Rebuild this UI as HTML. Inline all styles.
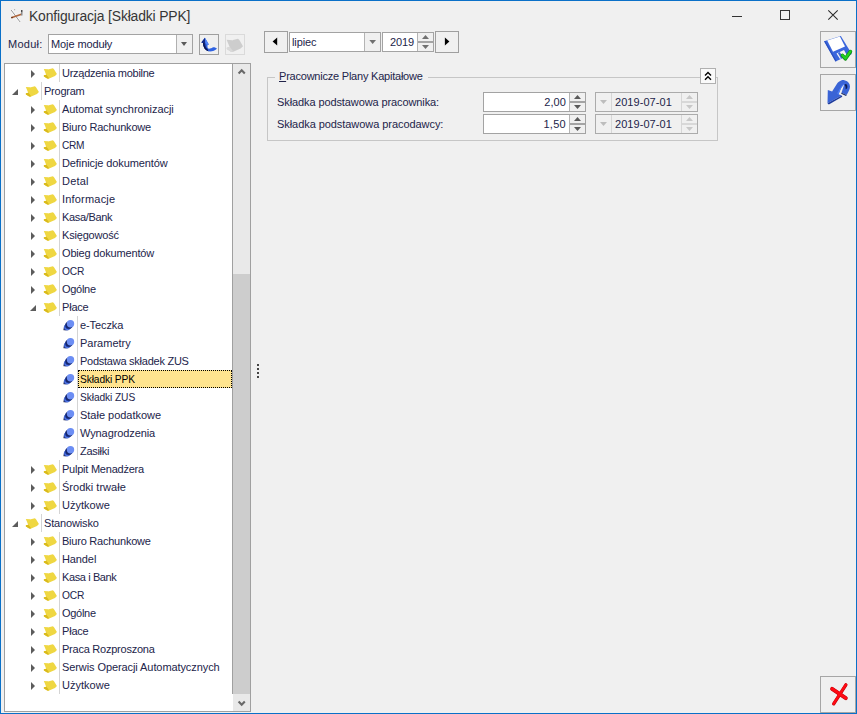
<!DOCTYPE html>
<html lang="pl"><head><meta charset="utf-8"><title>Konfiguracja [Składki PPK]</title>
<style>
*{box-sizing:border-box;margin:0;padding:0}
html,body{width:857px;height:714px;overflow:hidden;background:#f0f0f0}
body{position:relative;font-family:"Liberation Sans",sans-serif;font-size:11px;color:#22244a}
#win{position:absolute;left:0;top:0;width:857px;height:714px;background:#f0f0f0}
#frame{position:absolute;left:0;top:0;width:857px;height:714px;border:1px solid #0a70c8;z-index:10}
.abs{position:absolute}
b{font-weight:normal;white-space:nowrap}
.t{position:absolute;white-space:nowrap;line-height:14px;height:14px}
#title{left:28.5px;top:7px;font-size:14.67px;line-height:18px;height:18px;color:#363636}
.box{position:absolute;border:1px solid #a3a3a3;background:#fff}
.btn{position:absolute;border:1px solid #9f9f9f;background:#f0f0f0}
.rb{border-color:#a6a6a6}
#tree{position:absolute;left:4px;top:63px;width:247px;height:649px;border:1px solid #a0a0a0;background:#fff;overflow:hidden}
.row{position:absolute;left:0;width:228px;height:18px}
.row .lbl{position:absolute;top:2px;line-height:14px;height:14px;white-space:nowrap}
.row .sel{position:absolute;top:0;height:18px;width:154px;background:#ffe48f;border:1px dotted #000;color:#000;line-height:14px;padding:1px 0 0 1px;white-space:nowrap}
.ico{position:absolute;top:1px}
.sep{position:absolute;top:0;width:1px;height:18px;background:#d4d4d4}
.arr-c{position:absolute;top:6px;width:0;height:0;border-left:4px solid #5c5c5c;border-top:4px solid transparent;border-bottom:4px solid transparent}
.arr-e{position:absolute;top:7px;width:0;height:0;border-bottom:6px solid #5c5c5c;border-left:6px solid transparent}
#sb{position:absolute;left:227px;top:0;width:18px;height:647px;background:linear-gradient(to right,#fff 1px,#e9e9e9 1px)}
#sbl{position:absolute;left:0;top:0;width:1px;height:630px;background:#a0a0a0}
#thumb{position:absolute;left:1px;top:210px;width:17px;height:420px;background:#cdcdcd}
</style></head><body>
<div id="win">
<!-- title bar -->
<svg class="abs" style="left:9px;top:8px" width="18" height="18" viewBox="0 0 18 18">
<path d="M2.4 2.4 L10.8 13.6" stroke="#fff" stroke-width="2.2" opacity="0.7"/>
<path d="M2.4 2.4 L10.8 13.6" stroke="#5a5a5a" stroke-width="1" stroke-dasharray="1.6 0.9"/>
<circle cx="5.6" cy="1.7" r="0.6" fill="#aaa"/>
<path d="M3 9.5 L11.8 6.5" stroke="#b0663c" stroke-width="1.8" stroke-linecap="round"/>
<circle cx="3" cy="9.5" r="0.8" fill="#5a2c14"/>
<path d="M12.75 2 L12.75 4.6" stroke="#4a4a4a" stroke-width="1.5"/>
<path d="M12.75 4.6 L12.75 7.6" stroke="#8a8a8a" stroke-width="1.5"/>
</svg>
<div class="t" id="title"><b id="ttl" style="letter-spacing:-0.178px;display:inline-block;transform:scaleX(0.95);transform-origin:0 0;">Konfiguracja [Składki PPK]</b></div>
<svg class="abs" style="left:731px;top:9px" width="112" height="14" viewBox="0 0 112 14" shape-rendering="crispEdges">
<path d="M1 7.5 H11" stroke="#333" stroke-width="1"/>
<rect x="49.5" y="1.5" width="9" height="9" fill="none" stroke="#333" stroke-width="1"/>
</svg>
<svg class="abs" style="left:827px;top:9px" width="14" height="14" viewBox="0 0 14 14">
<path d="M1.3 1.3 L10.7 10.7 M10.7 1.3 L1.3 10.7" stroke="#2a2a2a" stroke-width="1.05"/>
</svg>

<!-- left toolbar -->
<div class="t" style="left:8px;top:37px"><b id="mod" style="letter-spacing:0.274px;">Moduł:</b></div>
<div class="box" style="left:48px;top:34px;width:145px;height:20px"></div>
<div class="abs" style="left:176px;top:35px;width:1px;height:18px;background:#b0b0b0"></div>
<div class="abs" style="left:177px;top:35px;width:15px;height:18px;background:#f0f0f0"></div>
<div class="abs" style="left:181px;top:42px;width:0;height:0;border-top:4px solid #5a5a5a;border-left:3.5px solid transparent;border-right:3.5px solid transparent"></div>
<div class="t" style="left:51px;top:37px"><b id="mm" style="letter-spacing:-0.1px;">Moje moduły</b></div>
<div class="btn" style="left:199px;top:34px;width:20px;height:21px"></div>
<svg class="abs" style="left:199px;top:34px" width="21" height="22" viewBox="0 0 21 22">
<path d="M5.9 3.8 L2.3 8.6 L4 8.9 C4.2 13 5.8 16 9.3 17.3 C12.5 17.8 16.3 16.6 17.9 14.7 C17 13.5 15.3 13 13.9 13.2 C12.3 14.5 10.3 14.9 9 14.5 C8.3 13.3 8.4 12 8.7 10.6 L10 10.8 Z" fill="#2f63e2"/>
<path d="M5.9 3.8 L2.3 8.6 L4 8.9 C4.2 13 5.8 16 9.3 17.3 L8.4 14.6 C6.6 13 6.2 11 6.3 8.4 Z" fill="#132a86"/>
<path d="M4 8.9 C4.2 13 5.8 16 9.3 17.3 L8.8 15.8 C6.6 14.6 5.4 12 5.2 9 Z" fill="#0c1650"/>
<path d="M5.9 3.8 L6.3 8.4 L7 10.2 L8.7 10.6 L10 10.8 Z" fill="#4f82f6"/>
</svg>
<div class="btn" style="left:225px;top:34px;width:20px;height:21px;border-color:#dadada"></div>
<svg class="abs" style="left:225px;top:37px" width="20" height="18" viewBox="1.5 2 16 14"><g opacity="1">
<path d="M2.8 4 L7.2 4.3 L7.5 4.6 L7.9 4.2 L11.9 3.2 L13 4.2 L15.9 9.1 L14 11 L7.6 13.8 L6.2 13.6 L2.9 11.4 L2.9 10.3 L5.2 9.8 Z" fill="#cdcdcd"/><path d="M2.9 10.3 L5.4 9.8 L7.6 12.6 L7.6 13.8 L6.2 13.6 L2.9 11.4 Z" fill="#d9d9d9"/></g>
</svg>

<!-- tree -->
<div id="tree">
<div class="row" style="top:0px"><i class="arr-c" style="left:26px"></i><svg class="ico" style="left:36px" width="16" height="16" viewBox="0 0 16 16"><path d="M2.8 4 L7.2 4.3 L7.5 4.6 L7.9 4.2 L11.9 3.2 L13 4.2 L15.9 9.1 L14 11 L7.6 13.8 L6.2 13.6 L2.9 11.4 L2.9 10.3 L5.2 9.8 Z" fill="#efd742"/><path d="M2.9 10.3 L5.4 9.8 L7.6 12.6 L7.6 13.8 L6.2 13.6 L2.9 11.4 Z" fill="#d9ba1c"/></svg><i class="sep" style="left:54px"></i><span class="lbl" style="left:57px" ><b id="r0" style="letter-spacing:-0.264px;">Urządzenia mobilne</b></span></div>
<div class="row" style="top:18px"><i class="arr-e" style="left:7px"></i><svg class="ico" style="left:18px" width="16" height="16" viewBox="0 0 16 16"><path d="M2.8 4 L7.2 4.3 L7.5 4.6 L7.9 4.2 L11.9 3.2 L13 4.2 L15.9 9.1 L14 11 L7.6 13.8 L6.2 13.6 L2.9 11.4 L2.9 10.3 L5.2 9.8 Z" fill="#efd742"/><path d="M2.9 10.3 L5.4 9.8 L7.6 12.6 L7.6 13.8 L6.2 13.6 L2.9 11.4 Z" fill="#d9ba1c"/></svg><i class="sep" style="left:36px"></i><span class="lbl" style="left:39px" ><b id="r1" style="letter-spacing:-0.24px;">Program</b></span></div>
<div class="row" style="top:36px"><i class="arr-c" style="left:26px"></i><svg class="ico" style="left:36px" width="16" height="16" viewBox="0 0 16 16"><path d="M2.8 4 L7.2 4.3 L7.5 4.6 L7.9 4.2 L11.9 3.2 L13 4.2 L15.9 9.1 L14 11 L7.6 13.8 L6.2 13.6 L2.9 11.4 L2.9 10.3 L5.2 9.8 Z" fill="#efd742"/><path d="M2.9 10.3 L5.4 9.8 L7.6 12.6 L7.6 13.8 L6.2 13.6 L2.9 11.4 Z" fill="#d9ba1c"/></svg><i class="sep" style="left:54px"></i><span class="lbl" style="left:57px" ><b id="r2" style="letter-spacing:-0.065px;">Automat synchronizacji</b></span></div>
<div class="row" style="top:54px"><i class="arr-c" style="left:26px"></i><svg class="ico" style="left:36px" width="16" height="16" viewBox="0 0 16 16"><path d="M2.8 4 L7.2 4.3 L7.5 4.6 L7.9 4.2 L11.9 3.2 L13 4.2 L15.9 9.1 L14 11 L7.6 13.8 L6.2 13.6 L2.9 11.4 L2.9 10.3 L5.2 9.8 Z" fill="#efd742"/><path d="M2.9 10.3 L5.4 9.8 L7.6 12.6 L7.6 13.8 L6.2 13.6 L2.9 11.4 Z" fill="#d9ba1c"/></svg><i class="sep" style="left:54px"></i><span class="lbl" style="left:57px" ><b id="r3" style="letter-spacing:-0.212px;">Biuro Rachunkowe</b></span></div>
<div class="row" style="top:72px"><i class="arr-c" style="left:26px"></i><svg class="ico" style="left:36px" width="16" height="16" viewBox="0 0 16 16"><path d="M2.8 4 L7.2 4.3 L7.5 4.6 L7.9 4.2 L11.9 3.2 L13 4.2 L15.9 9.1 L14 11 L7.6 13.8 L6.2 13.6 L2.9 11.4 L2.9 10.3 L5.2 9.8 Z" fill="#efd742"/><path d="M2.9 10.3 L5.4 9.8 L7.6 12.6 L7.6 13.8 L6.2 13.6 L2.9 11.4 Z" fill="#d9ba1c"/></svg><i class="sep" style="left:54px"></i><span class="lbl" style="left:57px" ><b id="r4" style="letter-spacing:-0.286px;display:inline-block;transform:scaleX(0.92);transform-origin:0 0;">CRM</b></span></div>
<div class="row" style="top:90px"><i class="arr-c" style="left:26px"></i><svg class="ico" style="left:36px" width="16" height="16" viewBox="0 0 16 16"><path d="M2.8 4 L7.2 4.3 L7.5 4.6 L7.9 4.2 L11.9 3.2 L13 4.2 L15.9 9.1 L14 11 L7.6 13.8 L6.2 13.6 L2.9 11.4 L2.9 10.3 L5.2 9.8 Z" fill="#efd742"/><path d="M2.9 10.3 L5.4 9.8 L7.6 12.6 L7.6 13.8 L6.2 13.6 L2.9 11.4 Z" fill="#d9ba1c"/></svg><i class="sep" style="left:54px"></i><span class="lbl" style="left:57px" ><b id="r5" style="letter-spacing:-0.1px;">Definicje dokumentów</b></span></div>
<div class="row" style="top:108px"><i class="arr-c" style="left:26px"></i><svg class="ico" style="left:36px" width="16" height="16" viewBox="0 0 16 16"><path d="M2.8 4 L7.2 4.3 L7.5 4.6 L7.9 4.2 L11.9 3.2 L13 4.2 L15.9 9.1 L14 11 L7.6 13.8 L6.2 13.6 L2.9 11.4 L2.9 10.3 L5.2 9.8 Z" fill="#efd742"/><path d="M2.9 10.3 L5.4 9.8 L7.6 12.6 L7.6 13.8 L6.2 13.6 L2.9 11.4 Z" fill="#d9ba1c"/></svg><i class="sep" style="left:54px"></i><span class="lbl" style="left:57px" ><b id="r6" style="letter-spacing:0.211px;">Detal</b></span></div>
<div class="row" style="top:126px"><i class="arr-c" style="left:26px"></i><svg class="ico" style="left:36px" width="16" height="16" viewBox="0 0 16 16"><path d="M2.8 4 L7.2 4.3 L7.5 4.6 L7.9 4.2 L11.9 3.2 L13 4.2 L15.9 9.1 L14 11 L7.6 13.8 L6.2 13.6 L2.9 11.4 L2.9 10.3 L5.2 9.8 Z" fill="#efd742"/><path d="M2.9 10.3 L5.4 9.8 L7.6 12.6 L7.6 13.8 L6.2 13.6 L2.9 11.4 Z" fill="#d9ba1c"/></svg><i class="sep" style="left:54px"></i><span class="lbl" style="left:57px" ><b id="r7" style="letter-spacing:0.191px;">Informacje</b></span></div>
<div class="row" style="top:144px"><i class="arr-c" style="left:26px"></i><svg class="ico" style="left:36px" width="16" height="16" viewBox="0 0 16 16"><path d="M2.8 4 L7.2 4.3 L7.5 4.6 L7.9 4.2 L11.9 3.2 L13 4.2 L15.9 9.1 L14 11 L7.6 13.8 L6.2 13.6 L2.9 11.4 L2.9 10.3 L5.2 9.8 Z" fill="#efd742"/><path d="M2.9 10.3 L5.4 9.8 L7.6 12.6 L7.6 13.8 L6.2 13.6 L2.9 11.4 Z" fill="#d9ba1c"/></svg><i class="sep" style="left:54px"></i><span class="lbl" style="left:57px" ><b id="r8" style="letter-spacing:-0.325px;">Kasa/Bank</b></span></div>
<div class="row" style="top:162px"><i class="arr-c" style="left:26px"></i><svg class="ico" style="left:36px" width="16" height="16" viewBox="0 0 16 16"><path d="M2.8 4 L7.2 4.3 L7.5 4.6 L7.9 4.2 L11.9 3.2 L13 4.2 L15.9 9.1 L14 11 L7.6 13.8 L6.2 13.6 L2.9 11.4 L2.9 10.3 L5.2 9.8 Z" fill="#efd742"/><path d="M2.9 10.3 L5.4 9.8 L7.6 12.6 L7.6 13.8 L6.2 13.6 L2.9 11.4 Z" fill="#d9ba1c"/></svg><i class="sep" style="left:54px"></i><span class="lbl" style="left:57px" ><b id="r9" style="letter-spacing:-0.192px;">Księgowość</b></span></div>
<div class="row" style="top:180px"><i class="arr-c" style="left:26px"></i><svg class="ico" style="left:36px" width="16" height="16" viewBox="0 0 16 16"><path d="M2.8 4 L7.2 4.3 L7.5 4.6 L7.9 4.2 L11.9 3.2 L13 4.2 L15.9 9.1 L14 11 L7.6 13.8 L6.2 13.6 L2.9 11.4 L2.9 10.3 L5.2 9.8 Z" fill="#efd742"/><path d="M2.9 10.3 L5.4 9.8 L7.6 12.6 L7.6 13.8 L6.2 13.6 L2.9 11.4 Z" fill="#d9ba1c"/></svg><i class="sep" style="left:54px"></i><span class="lbl" style="left:57px" ><b id="r10" style="letter-spacing:-0.173px;">Obieg dokumentów</b></span></div>
<div class="row" style="top:198px"><i class="arr-c" style="left:26px"></i><svg class="ico" style="left:36px" width="16" height="16" viewBox="0 0 16 16"><path d="M2.8 4 L7.2 4.3 L7.5 4.6 L7.9 4.2 L11.9 3.2 L13 4.2 L15.9 9.1 L14 11 L7.6 13.8 L6.2 13.6 L2.9 11.4 L2.9 10.3 L5.2 9.8 Z" fill="#efd742"/><path d="M2.9 10.3 L5.4 9.8 L7.6 12.6 L7.6 13.8 L6.2 13.6 L2.9 11.4 Z" fill="#d9ba1c"/></svg><i class="sep" style="left:54px"></i><span class="lbl" style="left:57px" ><b id="r11" style="letter-spacing:-0.212px;display:inline-block;transform:scaleX(0.93);transform-origin:0 0;">OCR</b></span></div>
<div class="row" style="top:216px"><i class="arr-c" style="left:26px"></i><svg class="ico" style="left:36px" width="16" height="16" viewBox="0 0 16 16"><path d="M2.8 4 L7.2 4.3 L7.5 4.6 L7.9 4.2 L11.9 3.2 L13 4.2 L15.9 9.1 L14 11 L7.6 13.8 L6.2 13.6 L2.9 11.4 L2.9 10.3 L5.2 9.8 Z" fill="#efd742"/><path d="M2.9 10.3 L5.4 9.8 L7.6 12.6 L7.6 13.8 L6.2 13.6 L2.9 11.4 Z" fill="#d9ba1c"/></svg><i class="sep" style="left:54px"></i><span class="lbl" style="left:57px" ><b id="r12" style="letter-spacing:-0.293px;">Ogólne</b></span></div>
<div class="row" style="top:234px"><i class="arr-e" style="left:25px"></i><svg class="ico" style="left:36px" width="16" height="16" viewBox="0 0 16 16"><path d="M2.8 4 L7.2 4.3 L7.5 4.6 L7.9 4.2 L11.9 3.2 L13 4.2 L15.9 9.1 L14 11 L7.6 13.8 L6.2 13.6 L2.9 11.4 L2.9 10.3 L5.2 9.8 Z" fill="#efd742"/><path d="M2.9 10.3 L5.4 9.8 L7.6 12.6 L7.6 13.8 L6.2 13.6 L2.9 11.4 Z" fill="#d9ba1c"/></svg><i class="sep" style="left:54px"></i><span class="lbl" style="left:57px" ><b id="r13" style="letter-spacing:-0.202px;">Płace</b></span></div>
<div class="row" style="top:252px"><svg class="ico" style="left:54px" width="16" height="16" viewBox="0 0 16 16"><path d="M4.4 11.2 L7.2 13.2 L4.6 13.3 Z" fill="#10163c"/><ellipse cx="7.9" cy="10.6" rx="3.1" ry="3" fill="#2340a6"/><ellipse cx="8.5" cy="9.9" rx="3.1" ry="3" fill="#5d83ee"/><ellipse cx="9.3" cy="9" rx="3.3" ry="3.2" fill="#2a49b4"/><ellipse cx="10.1" cy="8.1" rx="3.7" ry="3.6" fill="#15266a"/><ellipse cx="11.5" cy="6.7" rx="3.7" ry="3.7" fill="#6c8ef4"/>
</svg><i class="sep" style="left:72px"></i><span class="lbl" style="left:75px" ><b id="r14" style="letter-spacing:-0.096px;">e-Teczka</b></span></div>
<div class="row" style="top:270px"><svg class="ico" style="left:54px" width="16" height="16" viewBox="0 0 16 16"><path d="M4.4 11.2 L7.2 13.2 L4.6 13.3 Z" fill="#10163c"/><ellipse cx="7.9" cy="10.6" rx="3.1" ry="3" fill="#2340a6"/><ellipse cx="8.5" cy="9.9" rx="3.1" ry="3" fill="#5d83ee"/><ellipse cx="9.3" cy="9" rx="3.3" ry="3.2" fill="#2a49b4"/><ellipse cx="10.1" cy="8.1" rx="3.7" ry="3.6" fill="#15266a"/><ellipse cx="11.5" cy="6.7" rx="3.7" ry="3.7" fill="#6c8ef4"/>
</svg><i class="sep" style="left:72px"></i><span class="lbl" style="left:75px" ><b id="r15" style="letter-spacing:0.0px;">Parametry</b></span></div>
<div class="row" style="top:288px"><svg class="ico" style="left:54px" width="16" height="16" viewBox="0 0 16 16"><path d="M4.4 11.2 L7.2 13.2 L4.6 13.3 Z" fill="#10163c"/><ellipse cx="7.9" cy="10.6" rx="3.1" ry="3" fill="#2340a6"/><ellipse cx="8.5" cy="9.9" rx="3.1" ry="3" fill="#5d83ee"/><ellipse cx="9.3" cy="9" rx="3.3" ry="3.2" fill="#2a49b4"/><ellipse cx="10.1" cy="8.1" rx="3.7" ry="3.6" fill="#15266a"/><ellipse cx="11.5" cy="6.7" rx="3.7" ry="3.7" fill="#6c8ef4"/>
</svg><i class="sep" style="left:72px"></i><span class="lbl" style="left:75px" ><b id="r16" style="letter-spacing:-0.252px;">Podstawa składek ZUS</b></span></div>
<div class="row" style="top:306px"><svg class="ico" style="left:54px" width="16" height="16" viewBox="0 0 16 16"><path d="M4.4 11.2 L7.2 13.2 L4.6 13.3 Z" fill="#10163c"/><ellipse cx="7.9" cy="10.6" rx="3.1" ry="3" fill="#2340a6"/><ellipse cx="8.5" cy="9.9" rx="3.1" ry="3" fill="#5d83ee"/><ellipse cx="9.3" cy="9" rx="3.3" ry="3.2" fill="#2a49b4"/><ellipse cx="10.1" cy="8.1" rx="3.7" ry="3.6" fill="#15266a"/><ellipse cx="11.5" cy="6.7" rx="3.7" ry="3.7" fill="#6c8ef4"/>
</svg><i class="sep" style="left:72px"></i><span class="sel" style="left:73px"><b id="r17" style="letter-spacing:-0.13px;display:inline-block;transform:scaleX(0.93);transform-origin:0 0;">Składki PPK</b></span></div>
<div class="row" style="top:324px"><svg class="ico" style="left:54px" width="16" height="16" viewBox="0 0 16 16"><path d="M4.4 11.2 L7.2 13.2 L4.6 13.3 Z" fill="#10163c"/><ellipse cx="7.9" cy="10.6" rx="3.1" ry="3" fill="#2340a6"/><ellipse cx="8.5" cy="9.9" rx="3.1" ry="3" fill="#5d83ee"/><ellipse cx="9.3" cy="9" rx="3.3" ry="3.2" fill="#2a49b4"/><ellipse cx="10.1" cy="8.1" rx="3.7" ry="3.6" fill="#15266a"/><ellipse cx="11.5" cy="6.7" rx="3.7" ry="3.7" fill="#6c8ef4"/>
</svg><i class="sep" style="left:72px"></i><span class="lbl" style="left:75px" ><b id="r18" style="letter-spacing:-0.114px;display:inline-block;transform:scaleX(0.93);transform-origin:0 0;">Składki ZUS</b></span></div>
<div class="row" style="top:342px"><svg class="ico" style="left:54px" width="16" height="16" viewBox="0 0 16 16"><path d="M4.4 11.2 L7.2 13.2 L4.6 13.3 Z" fill="#10163c"/><ellipse cx="7.9" cy="10.6" rx="3.1" ry="3" fill="#2340a6"/><ellipse cx="8.5" cy="9.9" rx="3.1" ry="3" fill="#5d83ee"/><ellipse cx="9.3" cy="9" rx="3.3" ry="3.2" fill="#2a49b4"/><ellipse cx="10.1" cy="8.1" rx="3.7" ry="3.6" fill="#15266a"/><ellipse cx="11.5" cy="6.7" rx="3.7" ry="3.7" fill="#6c8ef4"/>
</svg><i class="sep" style="left:72px"></i><span class="lbl" style="left:75px" ><b id="r19" style="letter-spacing:-0.012px;">Stałe podatkowe</b></span></div>
<div class="row" style="top:360px"><svg class="ico" style="left:54px" width="16" height="16" viewBox="0 0 16 16"><path d="M4.4 11.2 L7.2 13.2 L4.6 13.3 Z" fill="#10163c"/><ellipse cx="7.9" cy="10.6" rx="3.1" ry="3" fill="#2340a6"/><ellipse cx="8.5" cy="9.9" rx="3.1" ry="3" fill="#5d83ee"/><ellipse cx="9.3" cy="9" rx="3.3" ry="3.2" fill="#2a49b4"/><ellipse cx="10.1" cy="8.1" rx="3.7" ry="3.6" fill="#15266a"/><ellipse cx="11.5" cy="6.7" rx="3.7" ry="3.7" fill="#6c8ef4"/>
</svg><i class="sep" style="left:72px"></i><span class="lbl" style="left:75px" ><b id="r20" style="letter-spacing:-0.097px;">Wynagrodzenia</b></span></div>
<div class="row" style="top:378px"><svg class="ico" style="left:54px" width="16" height="16" viewBox="0 0 16 16"><path d="M4.4 11.2 L7.2 13.2 L4.6 13.3 Z" fill="#10163c"/><ellipse cx="7.9" cy="10.6" rx="3.1" ry="3" fill="#2340a6"/><ellipse cx="8.5" cy="9.9" rx="3.1" ry="3" fill="#5d83ee"/><ellipse cx="9.3" cy="9" rx="3.3" ry="3.2" fill="#2a49b4"/><ellipse cx="10.1" cy="8.1" rx="3.7" ry="3.6" fill="#15266a"/><ellipse cx="11.5" cy="6.7" rx="3.7" ry="3.7" fill="#6c8ef4"/>
</svg><i class="sep" style="left:72px"></i><span class="lbl" style="left:75px" ><b id="r21" style="letter-spacing:-0.306px;">Zasiłki</b></span></div>
<div class="row" style="top:396px"><i class="arr-c" style="left:26px"></i><svg class="ico" style="left:36px" width="16" height="16" viewBox="0 0 16 16"><path d="M2.8 4 L7.2 4.3 L7.5 4.6 L7.9 4.2 L11.9 3.2 L13 4.2 L15.9 9.1 L14 11 L7.6 13.8 L6.2 13.6 L2.9 11.4 L2.9 10.3 L5.2 9.8 Z" fill="#efd742"/><path d="M2.9 10.3 L5.4 9.8 L7.6 12.6 L7.6 13.8 L6.2 13.6 L2.9 11.4 Z" fill="#d9ba1c"/></svg><i class="sep" style="left:54px"></i><span class="lbl" style="left:57px" ><b id="r22" style="letter-spacing:-0.234px;">Pulpit Menadżera</b></span></div>
<div class="row" style="top:414px"><i class="arr-c" style="left:26px"></i><svg class="ico" style="left:36px" width="16" height="16" viewBox="0 0 16 16"><path d="M2.8 4 L7.2 4.3 L7.5 4.6 L7.9 4.2 L11.9 3.2 L13 4.2 L15.9 9.1 L14 11 L7.6 13.8 L6.2 13.6 L2.9 11.4 L2.9 10.3 L5.2 9.8 Z" fill="#efd742"/><path d="M2.9 10.3 L5.4 9.8 L7.6 12.6 L7.6 13.8 L6.2 13.6 L2.9 11.4 Z" fill="#d9ba1c"/></svg><i class="sep" style="left:54px"></i><span class="lbl" style="left:57px" ><b id="r23" style="letter-spacing:0.018px;">Środki trwałe</b></span></div>
<div class="row" style="top:432px"><i class="arr-c" style="left:26px"></i><svg class="ico" style="left:36px" width="16" height="16" viewBox="0 0 16 16"><path d="M2.8 4 L7.2 4.3 L7.5 4.6 L7.9 4.2 L11.9 3.2 L13 4.2 L15.9 9.1 L14 11 L7.6 13.8 L6.2 13.6 L2.9 11.4 L2.9 10.3 L5.2 9.8 Z" fill="#efd742"/><path d="M2.9 10.3 L5.4 9.8 L7.6 12.6 L7.6 13.8 L6.2 13.6 L2.9 11.4 Z" fill="#d9ba1c"/></svg><i class="sep" style="left:54px"></i><span class="lbl" style="left:57px" ><b id="r24" style="letter-spacing:0.012px;">Użytkowe</b></span></div>
<div class="row" style="top:450px"><i class="arr-e" style="left:7px"></i><svg class="ico" style="left:18px" width="16" height="16" viewBox="0 0 16 16"><path d="M2.8 4 L7.2 4.3 L7.5 4.6 L7.9 4.2 L11.9 3.2 L13 4.2 L15.9 9.1 L14 11 L7.6 13.8 L6.2 13.6 L2.9 11.4 L2.9 10.3 L5.2 9.8 Z" fill="#efd742"/><path d="M2.9 10.3 L5.4 9.8 L7.6 12.6 L7.6 13.8 L6.2 13.6 L2.9 11.4 Z" fill="#d9ba1c"/></svg><i class="sep" style="left:36px"></i><span class="lbl" style="left:39px" ><b id="r25" style="letter-spacing:-0.145px;">Stanowisko</b></span></div>
<div class="row" style="top:468px"><i class="arr-c" style="left:26px"></i><svg class="ico" style="left:36px" width="16" height="16" viewBox="0 0 16 16"><path d="M2.8 4 L7.2 4.3 L7.5 4.6 L7.9 4.2 L11.9 3.2 L13 4.2 L15.9 9.1 L14 11 L7.6 13.8 L6.2 13.6 L2.9 11.4 L2.9 10.3 L5.2 9.8 Z" fill="#efd742"/><path d="M2.9 10.3 L5.4 9.8 L7.6 12.6 L7.6 13.8 L6.2 13.6 L2.9 11.4 Z" fill="#d9ba1c"/></svg><i class="sep" style="left:54px"></i><span class="lbl" style="left:57px" ><b id="r26" style="letter-spacing:-0.23px;">Biuro Rachunkowe</b></span></div>
<div class="row" style="top:486px"><i class="arr-c" style="left:26px"></i><svg class="ico" style="left:36px" width="16" height="16" viewBox="0 0 16 16"><path d="M2.8 4 L7.2 4.3 L7.5 4.6 L7.9 4.2 L11.9 3.2 L13 4.2 L15.9 9.1 L14 11 L7.6 13.8 L6.2 13.6 L2.9 11.4 L2.9 10.3 L5.2 9.8 Z" fill="#efd742"/><path d="M2.9 10.3 L5.4 9.8 L7.6 12.6 L7.6 13.8 L6.2 13.6 L2.9 11.4 Z" fill="#d9ba1c"/></svg><i class="sep" style="left:54px"></i><span class="lbl" style="left:57px" ><b id="r27" style="letter-spacing:-0.106px;">Handel</b></span></div>
<div class="row" style="top:504px"><i class="arr-c" style="left:26px"></i><svg class="ico" style="left:36px" width="16" height="16" viewBox="0 0 16 16"><path d="M2.8 4 L7.2 4.3 L7.5 4.6 L7.9 4.2 L11.9 3.2 L13 4.2 L15.9 9.1 L14 11 L7.6 13.8 L6.2 13.6 L2.9 11.4 L2.9 10.3 L5.2 9.8 Z" fill="#efd742"/><path d="M2.9 10.3 L5.4 9.8 L7.6 12.6 L7.6 13.8 L6.2 13.6 L2.9 11.4 Z" fill="#d9ba1c"/></svg><i class="sep" style="left:54px"></i><span class="lbl" style="left:57px" ><b id="r28" style="letter-spacing:-0.391px;">Kasa i Bank</b></span></div>
<div class="row" style="top:522px"><i class="arr-c" style="left:26px"></i><svg class="ico" style="left:36px" width="16" height="16" viewBox="0 0 16 16"><path d="M2.8 4 L7.2 4.3 L7.5 4.6 L7.9 4.2 L11.9 3.2 L13 4.2 L15.9 9.1 L14 11 L7.6 13.8 L6.2 13.6 L2.9 11.4 L2.9 10.3 L5.2 9.8 Z" fill="#efd742"/><path d="M2.9 10.3 L5.4 9.8 L7.6 12.6 L7.6 13.8 L6.2 13.6 L2.9 11.4 Z" fill="#d9ba1c"/></svg><i class="sep" style="left:54px"></i><span class="lbl" style="left:57px" ><b id="r29" style="letter-spacing:-0.212px;display:inline-block;transform:scaleX(0.93);transform-origin:0 0;">OCR</b></span></div>
<div class="row" style="top:540px"><i class="arr-c" style="left:26px"></i><svg class="ico" style="left:36px" width="16" height="16" viewBox="0 0 16 16"><path d="M2.8 4 L7.2 4.3 L7.5 4.6 L7.9 4.2 L11.9 3.2 L13 4.2 L15.9 9.1 L14 11 L7.6 13.8 L6.2 13.6 L2.9 11.4 L2.9 10.3 L5.2 9.8 Z" fill="#efd742"/><path d="M2.9 10.3 L5.4 9.8 L7.6 12.6 L7.6 13.8 L6.2 13.6 L2.9 11.4 Z" fill="#d9ba1c"/></svg><i class="sep" style="left:54px"></i><span class="lbl" style="left:57px" ><b id="r30" style="letter-spacing:-0.293px;">Ogólne</b></span></div>
<div class="row" style="top:558px"><i class="arr-c" style="left:26px"></i><svg class="ico" style="left:36px" width="16" height="16" viewBox="0 0 16 16"><path d="M2.8 4 L7.2 4.3 L7.5 4.6 L7.9 4.2 L11.9 3.2 L13 4.2 L15.9 9.1 L14 11 L7.6 13.8 L6.2 13.6 L2.9 11.4 L2.9 10.3 L5.2 9.8 Z" fill="#efd742"/><path d="M2.9 10.3 L5.4 9.8 L7.6 12.6 L7.6 13.8 L6.2 13.6 L2.9 11.4 Z" fill="#d9ba1c"/></svg><i class="sep" style="left:54px"></i><span class="lbl" style="left:57px" ><b id="r31" style="letter-spacing:-0.202px;">Płace</b></span></div>
<div class="row" style="top:576px"><i class="arr-c" style="left:26px"></i><svg class="ico" style="left:36px" width="16" height="16" viewBox="0 0 16 16"><path d="M2.8 4 L7.2 4.3 L7.5 4.6 L7.9 4.2 L11.9 3.2 L13 4.2 L15.9 9.1 L14 11 L7.6 13.8 L6.2 13.6 L2.9 11.4 L2.9 10.3 L5.2 9.8 Z" fill="#efd742"/><path d="M2.9 10.3 L5.4 9.8 L7.6 12.6 L7.6 13.8 L6.2 13.6 L2.9 11.4 Z" fill="#d9ba1c"/></svg><i class="sep" style="left:54px"></i><span class="lbl" style="left:57px" ><b id="r32" style="letter-spacing:-0.238px;">Praca Rozproszona</b></span></div>
<div class="row" style="top:594px"><i class="arr-c" style="left:26px"></i><svg class="ico" style="left:36px" width="16" height="16" viewBox="0 0 16 16"><path d="M2.8 4 L7.2 4.3 L7.5 4.6 L7.9 4.2 L11.9 3.2 L13 4.2 L15.9 9.1 L14 11 L7.6 13.8 L6.2 13.6 L2.9 11.4 L2.9 10.3 L5.2 9.8 Z" fill="#efd742"/><path d="M2.9 10.3 L5.4 9.8 L7.6 12.6 L7.6 13.8 L6.2 13.6 L2.9 11.4 Z" fill="#d9ba1c"/></svg><i class="sep" style="left:54px"></i><span class="lbl" style="left:57px" ><b id="r33" style="letter-spacing:-0.086px;">Serwis Operacji Automatycznych</b></span></div>
<div class="row" style="top:612px"><i class="arr-c" style="left:26px"></i><svg class="ico" style="left:36px" width="16" height="16" viewBox="0 0 16 16"><path d="M2.8 4 L7.2 4.3 L7.5 4.6 L7.9 4.2 L11.9 3.2 L13 4.2 L15.9 9.1 L14 11 L7.6 13.8 L6.2 13.6 L2.9 11.4 L2.9 10.3 L5.2 9.8 Z" fill="#efd742"/><path d="M2.9 10.3 L5.4 9.8 L7.6 12.6 L7.6 13.8 L6.2 13.6 L2.9 11.4 Z" fill="#d9ba1c"/></svg><i class="sep" style="left:54px"></i><span class="lbl" style="left:57px" ><b id="r34" style="letter-spacing:0.012px;">Użytkowe</b></span></div>
<div id="sb"><i id="sbl"></i><div id="thumb"></div>
<svg class="abs" style="left:5px;top:3px" width="10" height="8" viewBox="0 0 10 8"><path d="M1.6 6.4 L4.7 3.2 L7.8 6.4" stroke="#696969" stroke-width="2.1" fill="none"/></svg>
<svg class="abs" style="left:5px;top:635.5px" width="10" height="8" viewBox="0 0 10 8"><path d="M1.6 1.6 L4.7 4.8 L7.8 1.6" stroke="#696969" stroke-width="2.1" fill="none"/></svg>
</div>
</div>

<!-- splitter dots -->
<div class="abs" style="left:257px;top:364px;width:2px;height:2px;background:#444;box-shadow:0 4px 0 #444,0 8px 0 #444,0 12px 0 #444"></div>

<div class="btn" style="left:264px;top:31px;width:24px;height:22px"></div>
<svg class="abs" style="left:264px;top:31px" width="24" height="22" viewBox="0 0 24 22"><polygon points="8.6,10.5 13.2,6.5 13.2,14.5" fill="#000"/></svg>
<div class="box" style="left:289px;top:32px;width:92px;height:20px"></div>
<div class="abs" style="left:364px;top:33px;width:1px;height:18px;background:#b4b4b4"></div>
<div class="abs" style="left:365px;top:33px;width:15px;height:18px;background:#f0f0f0"></div>
<svg class="abs" style="left:365px;top:33px" width="15" height="18" viewBox="0 0 15 18"><polygon points="4.3,7 11,7 7.65,11" fill="#707070"/></svg>
<div class="t" style="left:292px;top:35px"><b id="lip" style="letter-spacing:-0.114px;">lipiec</b></div>
<div class="box" style="left:382px;top:32px;width:52px;height:20px"></div>
<div class="abs" style="left:417px;top:33px;width:1px;height:18px;background:#b4b4b4"></div><div class="abs" style="left:418px;top:33px;width:15px;height:18px;background:#f0f0f0"></div><div class="abs" style="left:418px;top:41px;width:15px;height:2px;background:#a4a4a4"></div><svg class="abs" style="left:418px;top:33px" width="15" height="18" viewBox="0 0 15 18"><polygon points="4,6 11,6 7.5,2" fill="#707070"/><polygon points="4,12 11,12 7.5,16" fill="#707070"/></svg>
<div class="t" style="left:390px;top:35px"><b id="yr" style="letter-spacing:-0.109px;">2019</b></div>
<div class="btn" style="left:435px;top:31px;width:24px;height:22px"></div>
<svg class="abs" style="left:435px;top:31px" width="24" height="22" viewBox="0 0 24 22"><polygon points="14.4,10.5 9.9,6.5 9.9,14.5" fill="#000"/></svg>
<div class="abs" style="left:267px;top:77px;width:451px;height:64px;border:1px solid #c6c6c6"></div>
<div class="abs" style="left:275px;top:70px;width:153px;height:12px;background:#f0f0f0"></div>
<div class="t" style="left:279px;top:69px"><b id="grp" style="letter-spacing:-0.221px;"><u>P</u>racownicze Plany Kapitałowe</b></div>
<div class="btn" style="left:700px;top:68px;width:16px;height:16px;border-color:#b0b0b0;background:#fafafa"></div>
<svg class="abs" style="left:700px;top:68px" width="16" height="16" viewBox="0 0 16 16"><path d="M5 7.5 L8 4.5 L11 7.5 M5 11.7 L8 8.7 L11 11.7" stroke="#000" stroke-width="1.4" fill="none"/></svg>
<div class="t" style="left:277px;top:95px"><b id="l1" style="letter-spacing:-0.101px;">Składka podstawowa pracownika:</b></div>
<div class="box" style="left:483px;top:92px;width:103px;height:20px"></div>
<div class="abs" style="left:569px;top:93px;width:1px;height:18px;background:#b4b4b4"></div><div class="abs" style="left:570px;top:93px;width:15px;height:18px;background:#f0f0f0"></div><div class="abs" style="left:570px;top:101px;width:15px;height:2px;background:#a4a4a4"></div><svg class="abs" style="left:570px;top:93px" width="15" height="18" viewBox="0 0 15 18"><polygon points="4,6 11,6 7.5,2" fill="#5a5a5a"/><polygon points="4,12 11,12 7.5,16" fill="#5a5a5a"/></svg>
<div class="t" style="left:483px;top:95px;width:83px;text-align:right"><b id="v1" style="letter-spacing:0.077px;">2,00</b></div>
<div class="box" style="left:595px;top:92px;width:103px;height:20px;background:#f0f0f0;border-color:#ababab"></div>
<div class="abs" style="left:611px;top:93px;width:1px;height:18px;background:#d6d6d6"></div>
<svg class="abs" style="left:596px;top:93px" width="15" height="18" viewBox="0 0 15 18"><polygon points="4,7 11,7 7.5,11" fill="#bdbdbd"/></svg>
<div class="abs" style="left:681px;top:93px;width:1px;height:18px;background:#d6d6d6"></div><div class="abs" style="left:682px;top:93px;width:15px;height:18px;background:#f0f0f0"></div><div class="abs" style="left:682px;top:101px;width:15px;height:2px;background:#d8d8d8"></div><svg class="abs" style="left:682px;top:93px" width="15" height="18" viewBox="0 0 15 18"><polygon points="4,6 11,6 7.5,2" fill="#c8c8c8"/><polygon points="4,12 11,12 7.5,16" fill="#c8c8c8"/></svg>
<div class="t" style="left:615px;top:95px"><b id="d1" style="letter-spacing:0.055px;">2019-07-01</b></div>
<div class="t" style="left:277px;top:117px"><b id="l2" style="letter-spacing:-0.061px;">Składka podstawowa pracodawcy:</b></div>
<div class="box" style="left:483px;top:114px;width:103px;height:20px"></div>
<div class="abs" style="left:569px;top:115px;width:1px;height:18px;background:#b4b4b4"></div><div class="abs" style="left:570px;top:115px;width:15px;height:18px;background:#f0f0f0"></div><div class="abs" style="left:570px;top:123px;width:15px;height:2px;background:#a4a4a4"></div><svg class="abs" style="left:570px;top:115px" width="15" height="18" viewBox="0 0 15 18"><polygon points="4,6 11,6 7.5,2" fill="#5a5a5a"/><polygon points="4,12 11,12 7.5,16" fill="#5a5a5a"/></svg>
<div class="t" style="left:483px;top:117px;width:83px;text-align:right"><b id="v2" style="letter-spacing:0.28px;">1,50</b></div>
<div class="box" style="left:595px;top:114px;width:103px;height:20px;background:#f0f0f0;border-color:#ababab"></div>
<div class="abs" style="left:611px;top:115px;width:1px;height:18px;background:#d6d6d6"></div>
<svg class="abs" style="left:596px;top:115px" width="15" height="18" viewBox="0 0 15 18"><polygon points="4,7 11,7 7.5,11" fill="#bdbdbd"/></svg>
<div class="abs" style="left:681px;top:115px;width:1px;height:18px;background:#d6d6d6"></div><div class="abs" style="left:682px;top:115px;width:15px;height:18px;background:#f0f0f0"></div><div class="abs" style="left:682px;top:123px;width:15px;height:2px;background:#d8d8d8"></div><svg class="abs" style="left:682px;top:115px" width="15" height="18" viewBox="0 0 15 18"><polygon points="4,6 11,6 7.5,2" fill="#c8c8c8"/><polygon points="4,12 11,12 7.5,16" fill="#c8c8c8"/></svg>
<div class="t" style="left:615px;top:117px"><b id="d2" style="letter-spacing:0.055px;">2019-07-01</b></div>
<!-- right buttons -->
<div class="btn rb" style="left:820px;top:31px;width:36px;height:37px"></div>
<svg class="abs" style="left:820px;top:31px" width="36" height="37" viewBox="0 0 36 37">
<path d="M4.1 10.3 L20.8 5 L31.9 22.9 L15.5 30.6 Z" fill="#3a66dc"/>
<path d="M4.1 10.3 L5.2 9.9 L16.6 30.1 L15.5 30.6 Z" fill="#2a4fc0"/>
<path d="M7.2 9.5 L19.9 5.6 L25 15.5 L13 20.8 Z" fill="#fff"/>
<path d="M16.5 22.5 L24 19 L27 24.5 L20 28 Z" fill="#f4f4f4"/>
<path d="M17.8 22 L19.8 21 L23 26.5 L21 27.5 Z" fill="#3a66dc"/>
<path d="M22.4 24.4 L25.4 27.8 L30.4 20.6" stroke="#0f8f12" stroke-width="3.6" fill="none" stroke-linecap="round" stroke-linejoin="round"/>
<path d="M22.4 24.2 L25.4 27.5 L30.4 20.4" stroke="#22d022" stroke-width="2.2" fill="none" stroke-linecap="round" stroke-linejoin="round"/>
</svg>
<div class="btn rb" style="left:820px;top:74px;width:36px;height:37px"></div>
<svg class="abs" style="left:820px;top:74px" width="36" height="37" viewBox="0 0 36 37">
<path d="M7.8 16 L7.5 29.3 L21.7 21.6 L18.6 20.2 L20.3 15.9 C21.5 13.5 23 11.3 24.3 10.6 C23.6 12.5 22.6 15.5 21.5 18.8 L26.6 21 C28.5 18 30 15 30 12.6 C30 9.5 28 7.2 25 6.4 C23.5 6 22.5 6 21.65 6.2 C19.5 7 18 8.5 17.3 9.25 L12.1 17.6 Z" fill="#3a64d6"/>
<path d="M17 19.4 L18.6 20.2 L20.3 15.9 C21.5 13.5 23 11.3 24.3 10.6 L25.6 10.1 L24 9.5 C22.5 10.5 21.5 11.8 20.6 13.2 Z" fill="#4c7cf4"/>
<path d="M24.3 10.6 L26 9.9 C27.4 10.4 27.8 12.5 27 14.6 L25.6 15.2 C25.8 13.5 25.4 11.8 24.3 10.6 Z" fill="#101c50"/>
<path d="M21.5 18.8 L26.6 21 L26.1 21.9 L21.2 19.7 Z" fill="#16265e"/>
<path d="M7.5 29.3 L21.7 21.6 L22.3 22.7 L8.8 30.4 Z" fill="#1d3a9c"/>
</svg>
<div class="btn rb" style="left:820px;top:676px;width:36px;height:37px"></div>
<svg class="abs" style="left:820px;top:676px" width="36" height="37" viewBox="0 0 36 37">
<g transform="translate(-1.1,-0.8)"><path d="M13.2 13.6 L26.9 23" stroke="#c00008" stroke-width="3.9" stroke-linecap="round"/>
<path d="M27 9.6 L14.8 28.6" stroke="#c00008" stroke-width="3.3" stroke-linecap="round"/>
<path d="M13.2 13.5 L26.9 22.9" stroke="#ff0a14" stroke-width="2.9" stroke-linecap="round"/>
<path d="M27 9.5 L14.8 28.5" stroke="#ff0a14" stroke-width="2.4" stroke-linecap="round"/></g>
</svg>
<div id="frame"></div>
</div>
</body></html>
